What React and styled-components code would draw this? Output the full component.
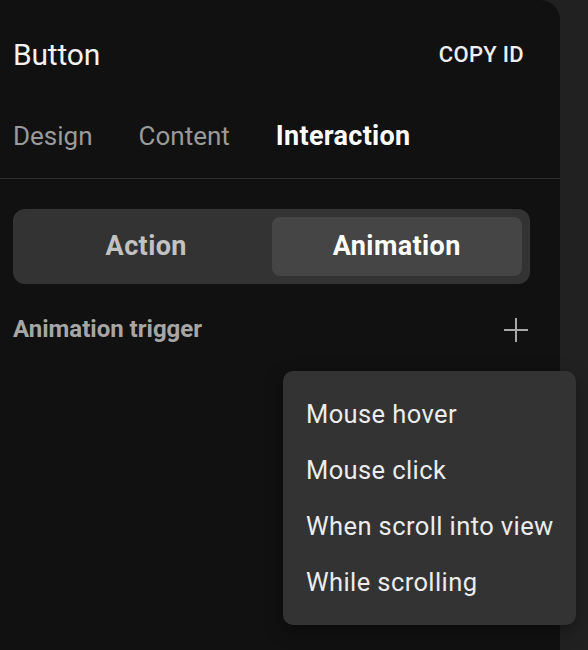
import React, { useState } from "react";
import styled, { createGlobalStyle } from "styled-components";

const GlobalStyle = createGlobalStyle`
  html, body {
    margin: 0;
    padding: 0;
    background: #212121;
    font-family: Roboto, "Liberation Sans", sans-serif;
    -webkit-font-smoothing: antialiased;
  }
`;

const Page = styled.div`
  position: relative;
  width: 588px;
  height: 650px;
  overflow: hidden;
  background: #212121;
`;

const Panel = styled.div`
  width: 560px;
  height: 650px;
  background: #111111;
  border-top-right-radius: 20px;
  display: flex;
  flex-direction: column;
`;

const Header = styled.div`
  height: 108px;
  display: flex;
  align-items: center;
  justify-content: space-between;
  padding: 0 36px 0 13px;
`;

const Title = styled.div`
  font-size: 30px;
  color: #f2f2f2;
  letter-spacing: -0.2px;
`;

const CopyButton = styled.button`
  background: none;
  border: 0;
  padding: 0;
  font-family: inherit;
  font-size: 22px;
  font-weight: 500;
  color: #eeeeee;
  letter-spacing: 0.3px;
  cursor: pointer;
`;

const Tabs = styled.div`
  display: flex;
  gap: 46px;
  height: 70px;
  padding: 0 13px;
  border-bottom: 1px solid #303030;
`;

const Tab = styled.div`
  line-height: 56px;
  font-size: ${(p) => (p.$active ? "27px" : "26px")};
  font-weight: ${(p) => (p.$active ? 700 : 400)};
  color: ${(p) => (p.$active ? "#ffffff" : "#9a9a9a")};
  letter-spacing: ${(p) => (p.$active ? "0.3px" : "0")};
`;

const Segmented = styled.div`
  margin: 30px 0 0 13px;
  width: 517px;
  height: 75px;
  box-sizing: border-box;
  padding: 8px;
  background: #333333;
  border-radius: 12px;
  display: grid;
  grid-template-columns: 1fr 1fr;
`;

const Segment = styled.div`
  display: flex;
  align-items: center;
  justify-content: center;
  border-radius: 8px;
  background: ${(p) => (p.$active ? "#454545" : "transparent")};
  color: ${(p) => (p.$active ? "#ffffff" : "#c2c2c2")};
  font-size: 27px;
  font-weight: 700;
  letter-spacing: 0.4px;
  padding-bottom: 2px;
`;

const TriggerRow = styled.div`
  margin-top: 16px;
  height: 60px;
  display: flex;
  align-items: center;
  justify-content: space-between;
  padding: 0 31px 0 13px;
`;

const TriggerLabel = styled.div`
  font-size: 24px;
  font-weight: 700;
  color: #a6a6a6;
  margin-top: -2px;
`;

const PlusIcon = styled.svg`
  width: 26px;
  height: 26px;
  display: block;
`;

const Menu = styled.div`
  position: absolute;
  left: 283px;
  top: 371px;
  width: 293px;
  box-sizing: border-box;
  padding: 15px 0;
  background: #333333;
  border-radius: 10px;
  box-shadow: 0 6px 18px rgba(0, 0, 0, 0.35);
`;

const MenuItem = styled.div`
  height: 56px;
  line-height: 56px;
  padding: 0 23px;
  font-size: 25.5px;
  color: #ececec;
  letter-spacing: 0.4px;
  white-space: nowrap;
`;

const triggers = ["Mouse hover", "Mouse click", "When scroll into view", "While scrolling"];

export default function App() {
  const [tab] = useState("Interaction");
  const [mode] = useState("Animation");

  return (
    <Page>
      <GlobalStyle />
      <Panel>
        <Header>
          <Title>Button</Title>
          <CopyButton>COPY ID</CopyButton>
        </Header>
        <Tabs>
          {["Design", "Content", "Interaction"].map((t) => (
            <Tab key={t} $active={t === tab}>
              {t}
            </Tab>
          ))}
        </Tabs>
        <Segmented>
          {["Action", "Animation"].map((m) => (
            <Segment key={m} $active={m === mode}>
              {m}
            </Segment>
          ))}
        </Segmented>
        <TriggerRow>
          <TriggerLabel>Animation trigger</TriggerLabel>
          <PlusIcon viewBox="0 0 26 26">
            <path d="M13 1v24M1 13h24" stroke="#a8a8a8" strokeWidth="2" fill="none" />
          </PlusIcon>
        </TriggerRow>
      </Panel>
      <Menu>
        {triggers.map((t) => (
          <MenuItem key={t}>{t}</MenuItem>
        ))}
      </Menu>
    </Page>
  );
}
